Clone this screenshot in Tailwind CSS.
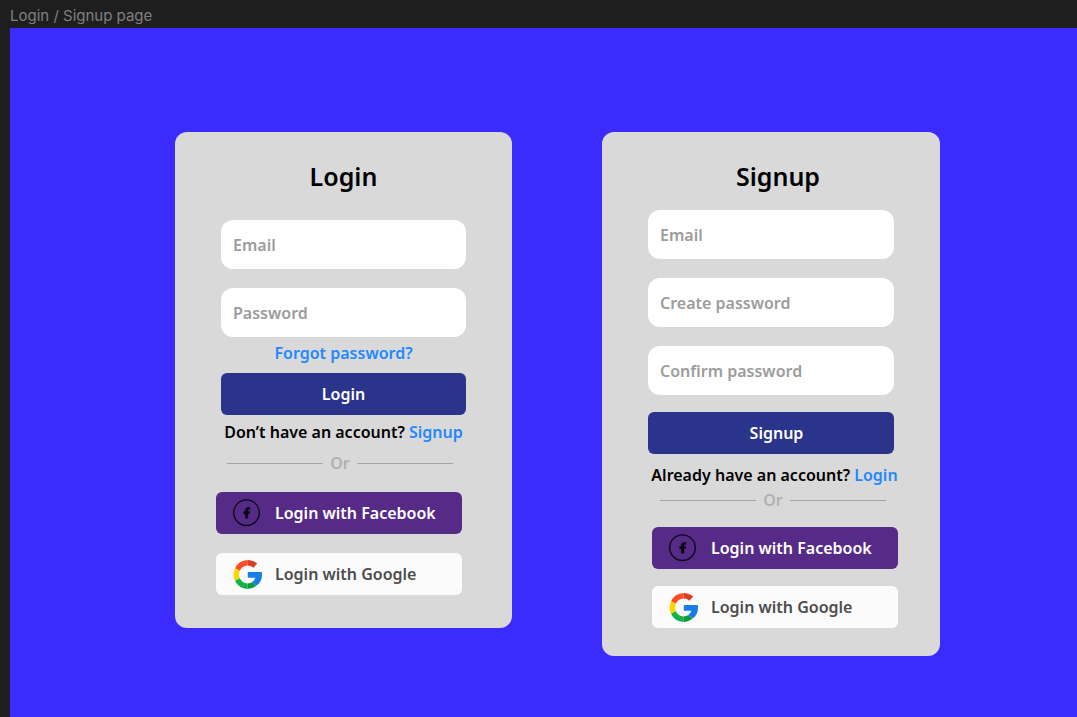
<!DOCTYPE html>
<html lang="en">
<head>
<meta charset="utf-8">
<meta name="viewport" content="width=device-width, initial-scale=1">
<title>Login / Signup page</title>
<script src="https://cdn.jsdelivr.net/npm/@tailwindcss/browser@4"></script>
</head>
<body class="flex min-h-screen flex-col bg-[#1e1e1e] pl-[10px] font-['Noto_Sans',sans-serif] text-[16px] leading-[24px] font-semibold">
<svg class="hidden" aria-hidden="true">
  <symbol id="facebook" viewBox="0 0 28 28">
    <circle cx="13.5" cy="13.7" r="12.8" fill="none" stroke="#0b0614" stroke-width="1.3"/>
    <path d="M12.3 19.2v-4.6h-1.7v-2.2h1.7v-1.1c0-2 1.1-3.1 3-3.1h1.6v2.2h-1c-.8 0-1 .4-1 1v1h2l-.3 2.2h-1.7v4.6z" fill="#0b0614" stroke="#0b0614" stroke-width=".4"/>
  </symbol>
  <symbol id="google" viewBox="0 0 29 29">
    <path d="M2 8.3A14.4 14.4 0 0 1 14.5 0v5.6a9 9 0 0 0-7.7 5.1z" fill="#ff4c26"/>
    <path d="M14.5 0c3.8 0 7.1 1.3 9.7 3.6l-3.8 4.1a8.8 8.8 0 0 0-5.9-2.1z" fill="#dc3f20"/>
    <path d="M2 8.3 6.8 10.7a9 9 0 0 0 0 7.6L2 20.8a14.4 14.4 0 0 1 0-12.5z" fill="#ffd500"/>
    <path d="m2 20.8 4.8-2.5a9 9 0 0 0 7.7 5.1V29A14.4 14.4 0 0 1 2 20.8z" fill="#12b347"/>
    <path d="M14.5 23.4c2 0 3.5-.5 4.8-1.3l4.2 3.5a14 14 0 0 1-9 3.4z" fill="#0f993e"/>
    <path d="M14.8 12H28.7c.3 1.2.3 2.3.3 3.2 0 4.6-2.1 8-5.5 10.4l-4.2-3.5a7 7 0 0 0 3-4.4h-7.5z" fill="#167ee6"/>
  </symbol>
</svg>
<header class="flex h-[28px] items-end font-['Inter',sans-serif] text-[15px] font-normal text-[#808080]">Login / Signup page</header>
<main class="flex flex-1 flex-wrap items-start justify-center gap-[90px] bg-[#3b2bff] py-[61px] pt-[104px] pl-[28px]">

  <section class="w-full max-w-[337px] rounded-[12px] bg-[#d9d9d9] pt-[28px] pb-[33px]" aria-labelledby="login-title">
    <h1 id="login-title" class="text-center text-[25px] leading-[32px] text-black">Login</h1>
    <form class="mt-[28px] flex flex-col px-[46px]">
      <div class="flex flex-col gap-[19px]">
        <input type="email" aria-label="Email" placeholder="Email" class="h-[49px] w-full rounded-[12px] bg-white px-[12px] placeholder:text-[#9c9c9c]">
        <input type="password" aria-label="Password" placeholder="Password" class="h-[49px] w-full rounded-[12px] bg-white px-[12px] placeholder:text-[#9c9c9c]">
      </div>
      <a href="#" class="mt-[4px] self-center text-[#2488ff]">Forgot password?</a>
      <button type="submit" class="mt-[8px] h-[42px] w-full rounded-[6px] bg-[#2b348b] text-white">Login</button>
    </form>
    <p class="mt-[5px] text-center whitespace-nowrap text-black">Don’t have an account? <a href="#signup-title" class="text-[#2488ff]">Signup</a></p>
    <div class="mt-[7px] flex items-center gap-[7px] pr-[59px] pl-[52px] text-[#b0b0b0]">
      <span class="h-px flex-1 bg-[#a3a3a3]"></span>Or<span class="h-px flex-1 bg-[#a3a3a3]"></span>
    </div>
    <div class="mt-[17px] flex flex-col gap-[19px] pr-[50px] pl-[41px]">
      <button type="button" class="flex h-[42px] items-center gap-[14px] rounded-[6px] bg-[#562b88] pl-[17px] whitespace-nowrap text-white"><svg class="size-[28px]" aria-hidden="true"><use href="#facebook"/></svg>Login with Facebook</button>
      <button type="button" class="flex h-[42px] items-center gap-[13px] rounded-[6px] bg-[#fbfbfb] pl-[17px] whitespace-nowrap text-[#4d4d4d]"><svg class="size-[29px]" aria-hidden="true"><use href="#google"/></svg>Login with Google</button>
    </div>
  </section>

  <section class="w-full max-w-[338px] rounded-[12px] bg-[#d9d9d9] pt-[28px] pb-[28px]" aria-labelledby="signup-title">
    <h1 id="signup-title" class="pl-[14px] text-center text-[25px] leading-[32px] text-black">Signup</h1>
    <form class="mt-[18px] flex flex-col px-[46px]">
      <div class="flex flex-col gap-[19px]">
        <input type="email" aria-label="Email" placeholder="Email" class="h-[49px] w-full rounded-[12px] bg-white px-[12px] placeholder:text-[#9c9c9c]">
        <input type="password" aria-label="Create password" placeholder="Create password" class="h-[49px] w-full rounded-[12px] bg-white px-[12px] placeholder:text-[#9c9c9c]">
        <input type="password" aria-label="Confirm password" placeholder="Confirm password" class="h-[49px] w-full rounded-[12px] bg-white px-[12px] placeholder:text-[#9c9c9c]">
      </div>
      <button type="submit" class="mt-[17px] h-[42px] w-full rounded-[6px] bg-[#2b348b] pl-[11px] text-white">Signup</button>
    </form>
    <p class="mt-[9px] pl-[7px] text-center whitespace-nowrap text-black">Already have an account? <a href="#login-title" class="text-[#2488ff]">Login</a></p>
    <div class="mt-[1px] flex items-center gap-[7px] pr-[54px] pl-[58px] text-[#b0b0b0]">
      <span class="h-px flex-1 bg-[#a3a3a3]"></span>Or<span class="h-px flex-1 bg-[#a3a3a3]"></span>
    </div>
    <div class="mt-[15px] flex flex-col gap-[17px] pr-[42px] pl-[50px]">
      <button type="button" class="flex h-[42px] items-center gap-[14px] rounded-[6px] bg-[#562b88] pl-[17px] whitespace-nowrap text-white"><svg class="size-[28px]" aria-hidden="true"><use href="#facebook"/></svg>Login with Facebook</button>
      <button type="button" class="flex h-[42px] items-center gap-[13px] rounded-[6px] bg-[#fbfbfb] pl-[17px] whitespace-nowrap text-[#4d4d4d]"><svg class="size-[29px]" aria-hidden="true"><use href="#google"/></svg>Login with Google</button>
    </div>
  </section>
</main>
</body>
</html>
